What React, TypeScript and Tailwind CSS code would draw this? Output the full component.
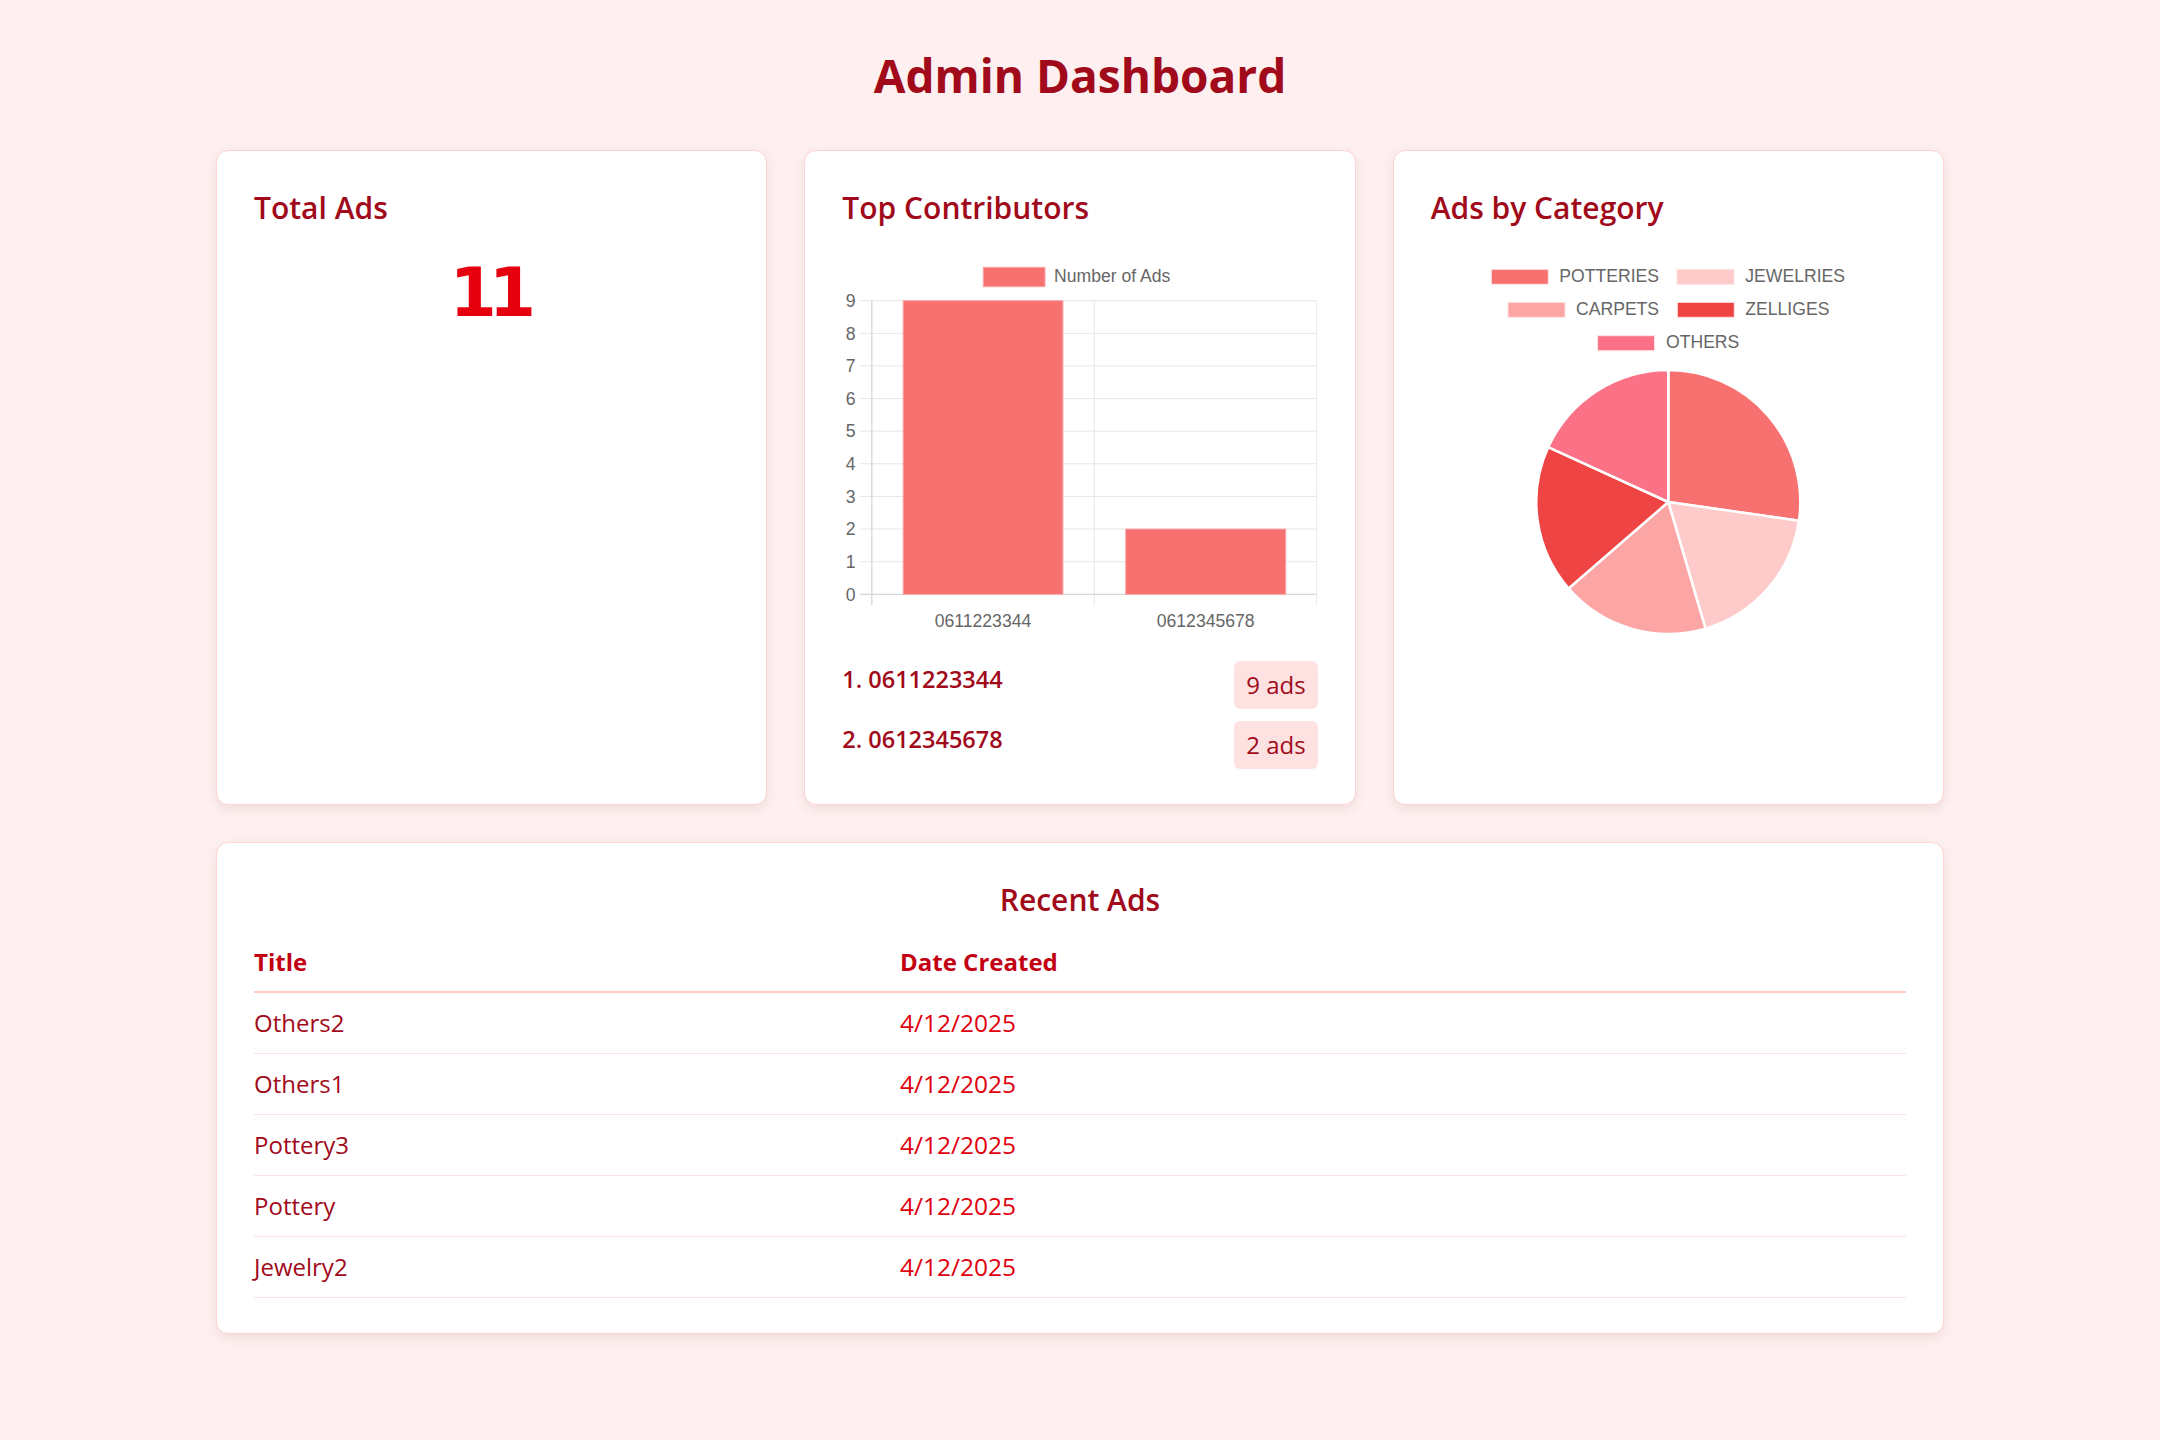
import React from "react";

const DARK = "text-[#a10a1a]";

function Card({ children, className = "" }: { children: React.ReactNode; className?: string }) {
  return (
    <div
      className={
        "rounded-[12px] border border-[#fdd3d3] bg-white px-[37px] pt-[37px] shadow-[0_4px_12px_rgba(120,0,0,0.09)] " +
        className
      }
    >
      {children}
    </div>
  );
}

function CardTitle({ children }: { children: React.ReactNode }) {
  return <h2 className={"text-[30px] leading-[40px] font-semibold " + DARK}>{children}</h2>;
}

const AX = "'Liberation Sans', Arial, sans-serif";

function BarChart() {
  const X0 = 29.8;
  const X1 = 474.8;
  const Y0 = 344.3;
  const TOP = 50.7;
  const unit = (Y0 - TOP) / 9;
  const ticks = [0, 1, 2, 3, 4, 5, 6, 7, 8, 9];
  const mid = (X0 + X1) / 2;
  return (
    <svg width="475" height="385" viewBox="0 0 475 385" className="block">
      <rect x="141.3" y="17.3" width="61.7" height="19.4" fill="#f87171" stroke="#fca5a5" strokeWidth="1" />
      <text x="212" y="32.3" fontFamily={AX} fontSize="17.6" fill="#666">
        Number of Ads
      </text>
      {ticks.map((k) => (
        <line key={"h" + k} x1="18" x2={X1} y1={Y0 - k * unit} y2={Y0 - k * unit} stroke="#e6e6e6" strokeWidth="1" />
      ))}
      {[X0, mid, X1].map((x, i) => (
        <line key={"v" + i} x1={x} x2={x} y1={TOP} y2={Y0 + 11} stroke="#e6e6e6" strokeWidth="1" />
      ))}
      <line x1={X0} x2={X0} y1={TOP} y2={Y0 + 11} stroke="#d9d9d9" strokeWidth="1.2" />
      <line x1="18" x2={X1} y1={Y0} y2={Y0} stroke="#d9d9d9" strokeWidth="1.2" />
      {ticks.map((k) => (
        <text
          key={"t" + k}
          x="13.5"
          y={Y0 - k * unit + 6.2}
          textAnchor="end"
          fontFamily={AX}
          fontSize="17.6"
          fill="#666"
        >
          {k}
        </text>
      ))}
      <rect x="61.2" y={TOP} width="159.7" height={Y0 - TOP} fill="#f87171" stroke="#f9a3a3" strokeWidth="1" />
      <rect x="283.7" y={Y0 - 2 * unit} width="160" height={2 * unit} fill="#f87171" stroke="#f9a3a3" strokeWidth="1" />
      <text x="141" y="377.3" textAnchor="middle" fontFamily={AX} fontSize="17.6" fill="#666">
        0611223344
      </text>
      <text x="363.7" y="377.3" textAnchor="middle" fontFamily={AX} fontSize="17.6" fill="#666">
        0612345678
      </text>
    </svg>
  );
}

const pieData = [
  { label: "POTTERIES", value: 3, color: "#f87171", bx: 60.3, by: 19.3, tx: 128.3, ty: 32 },
  { label: "JEWELRIES", value: 2, color: "#fecaca", bx: 246, by: 19.3, tx: 314.3, ty: 32 },
  { label: "CARPETS", value: 2, color: "#fca5a5", bx: 77, by: 52.3, tx: 145, ty: 65 },
  { label: "ZELLIGES", value: 2, color: "#ef4444", bx: 246.3, by: 52.3, tx: 314.3, ty: 65 },
  { label: "OTHERS", value: 2, color: "#fb7185", bx: 166.6, by: 85.7, tx: 235, ty: 98.3 },
];

function slicePath(cx: number, cy: number, r: number, a0: number, a1: number) {
  const x0 = cx + r * Math.cos(a0);
  const y0 = cy + r * Math.sin(a0);
  const x1 = cx + r * Math.cos(a1);
  const y1 = cy + r * Math.sin(a1);
  const large = a1 - a0 > Math.PI ? 1 : 0;
  return `M${cx},${cy} L${x0.toFixed(2)},${y0.toFixed(2)} A${r},${r} 0 ${large} 1 ${x1.toFixed(2)},${y1.toFixed(2)} Z`;
}

function PieChart() {
  const cx = 237.3;
  const cy = 252;
  const r = 132;
  const total = pieData.reduce((s, d) => s + d.value, 0);
  let a = -Math.PI / 2;
  const slices = pieData.map((d) => {
    const a0 = a;
    const a1 = a + (d.value / total) * Math.PI * 2;
    a = a1;
    return { ...d, path: slicePath(cx, cy, r, a0, a1) };
  });
  return (
    <svg width="475" height="400" viewBox="0 0 475 400" className="block">
      {pieData.map((d) => (
        <g key={d.label}>
          <rect x={d.bx} y={d.by} width="57" height="15" fill={d.color} stroke="#ffe4e4" strokeWidth="1" />
          <text x={d.tx} y={d.ty} fontFamily={AX} fontSize="17.6" fill="#666">
            {d.label}
          </text>
        </g>
      ))}
      {slices.map((s) => (
        <path key={s.label} d={s.path} fill={s.color} stroke="#ffffff" strokeWidth="2.5" strokeLinejoin="round" />
      ))}
    </svg>
  );
}

const contributors = [
  { rank: 1, phone: "0611223344", ads: 9 },
  { rank: 2, phone: "0612345678", ads: 2 },
];

const recent = ["Others2", "Others1", "Pottery3", "Pottery", "Jewelry2"];

export default function App() {
  return (
    <div className="min-h-screen bg-[#fef0f0] font-['Open_Sans',sans-serif]">
      <div className="mx-auto w-[1728px] pt-[44px] pb-[100px]">
        <h1 className={"text-center text-[46px] leading-[62px] font-bold " + DARK}>Admin Dashboard</h1>

        <div className="mt-[44px] grid grid-cols-3 gap-[37px]">
          <Card className="h-[655px]">
            <CardTitle>Total Ads</CardTitle>
            <div className="mt-[25px] pr-[6px] text-center font-['DejaVu_Sans',sans-serif] text-[68px] leading-[80px] font-bold tracking-[-0.12em] text-[#e6000f]">
              11
            </div>
          </Card>

          <Card className="h-[655px]">
            <CardTitle>Top Contributors</CardTitle>
            <div className="mt-[22px]">
              <BarChart />
            </div>
            <div className="mt-[26px] flex flex-col gap-[12px]">
              {contributors.map((c) => (
                <div key={c.rank} className="flex items-start justify-between">
                  <span className={"mt-[1px] text-[23.5px] leading-[34px] font-semibold " + DARK}>
                    {c.rank}. {c.phone}
                  </span>
                  <span className={"rounded-[6px] bg-[#fee2e2] px-[12px] py-[7px] text-[24px] leading-[34px] " + DARK}>
                    {c.ads} ads
                  </span>
                </div>
              ))}
            </div>
          </Card>

          <Card className="h-[655px]">
            <CardTitle>Ads by Category</CardTitle>
            <div className="mt-[22px]">
              <PieChart />
            </div>
          </Card>
        </div>

        <Card className="mt-[37px] pb-[35px]">
          <h2 className={"text-center text-[30px] leading-[40px] font-semibold " + DARK}>Recent Ads</h2>
          <div className="mt-[12px]">
            <div className="flex h-[61px] items-center border-b-2 border-[#fecaca] text-[24px] font-bold text-[#c20012]">
              <div className="w-[646px]">Title</div>
              <div>Date Created</div>
            </div>
            {recent.map((t) => (
              <div key={t} className="flex h-[61px] items-center border-b border-[#fde4e4] text-[24px]">
                <div className={"w-[646px] " + DARK}>{t}</div>
                <div className="text-[24.5px] font-medium text-[#e0000e]">4/12/2025</div>
              </div>
            ))}
          </div>
        </Card>
      </div>
    </div>
  );
}
